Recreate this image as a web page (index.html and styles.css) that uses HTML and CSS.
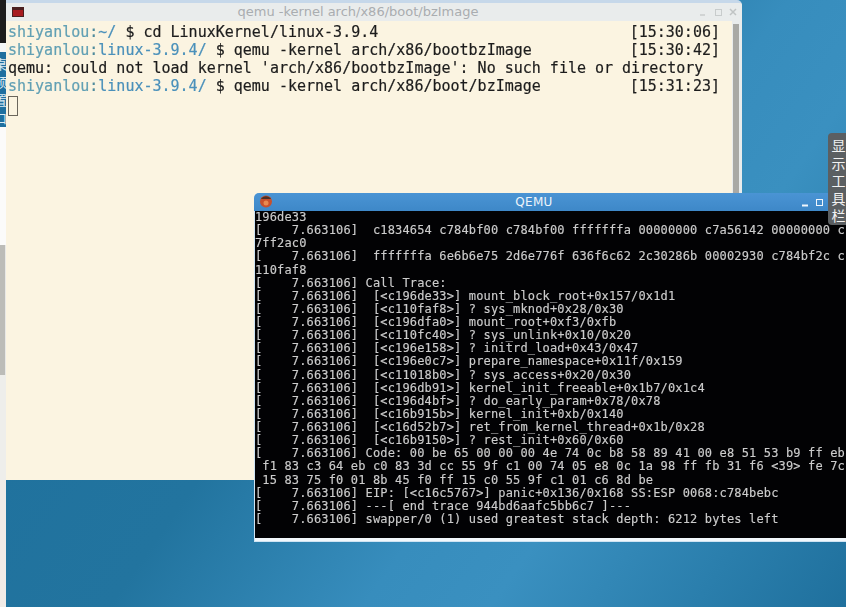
FILE: index.html
```html
<!DOCTYPE html>
<html lang="zh">
<head>
<meta charset="utf-8">
<title>QEMU</title>
<link rel="stylesheet" href="styles.css">
</head>
<body>
<main class="desktop">
  <aside class="edge">
    <div class="edge-dark"></div>
    <div class="edge-gap"></div>
    <div class="edge-blue"><span>桌</span><span>预</span><span>置</span><span>口</span></div>
    <div class="edge-white"></div>
    <div class="edge-thumb"></div>
    <div class="edge-light"></div>
    <div class="edge-rest"></div>
  </aside>

  <section class="terminal">
    <header class="term-title">
      <svg class="term-icon" width="12" height="10" viewBox="0 0 12 10"><rect width="12" height="10" fill="#4a2020"/><rect x="1" y="3" width="10" height="6" fill="#a81c20"/></svg>
      <span class="term-name">qemu -kernel arch/x86/boot/bzImage</span>
      <span class="term-btns">
        <svg width="44" height="10" viewBox="0 0 44 10"><path d="M1 8h5" stroke="#c8cccc" stroke-width="1.5"/><rect x="16.5" y="2.5" width="6" height="6" fill="none" stroke="#c8cccc"/><path d="M31 2l6 6M37 2l-6 6" stroke="#c0c4c4" stroke-width="1.5"/></svg>
      </span>
    </header>
    <div class="term-body">
      <div class="term-text">
        <div class="row"><span><b class="p1">shiyanlou</b><b class="p0">:</b><b class="p2">~/</b> $ cd LinuxKernel/linux-3.9.4</span><span>[15:30:06]</span></div>
        <div class="row"><span><b class="p1">shiyanlou</b><b class="p0">:</b><b class="p2">linux-3.9.4/</b> $ qemu -kernel arch/x86/bootbzImage</span><span>[15:30:42]</span></div>
        <div class="row"><span>qemu: could not load kernel 'arch/x86/bootbzImage': No such file or directory</span></div>
        <div class="row"><span><b class="p1">shiyanlou</b><b class="p0">:</b><b class="p2">linux-3.9.4/</b> $ qemu -kernel arch/x86/boot/bzImage</span><span>[15:31:23]</span></div>
        <div class="row"><span class="cursor"></span></div>
      </div>
      <div class="term-scroll"><div class="term-thumb"></div></div>
    </div>
  </section>

  <section class="qemu">
    <header class="qemu-title">
      <svg class="qemu-icon" width="14" height="14" viewBox="0 0 14 14"><circle cx="7" cy="7.5" r="6" fill="#c8502c"/><path d="M2 5a6 6 0 0 1 10 0z" fill="#4a3028"/><circle cx="7" cy="9" r="2.5" fill="#e88a50"/></svg>
      <span class="qemu-name">QEMU</span>
      <span class="qemu-btns">
        <svg width="30" height="10" viewBox="0 0 30 10"><path d="M0 7.5h6" stroke="#f0f6fc" stroke-width="2"/><rect x="14.5" y="1.5" width="6" height="6" fill="none" stroke="#f0f6fc"/></svg>
      </span>
    </header>
<pre class="console">196de33
[    7.663106]  c1834654 c784bf00 c784bf00 fffffffa 00000000 c7a56142 00000000 c
7ff2ac0
[    7.663106]  fffffffa 6e6b6e75 2d6e776f 636f6c62 2c30286b 00002930 c784bf2c c
110faf8
[    7.663106] Call Trace:
[    7.663106]  [&lt;c196de33&gt;] mount_block_root+0x157/0x1d1
[    7.663106]  [&lt;c110faf8&gt;] ? sys_mknod+0x28/0x30
[    7.663106]  [&lt;c196dfa0&gt;] mount_root+0xf3/0xfb
[    7.663106]  [&lt;c110fc40&gt;] ? sys_unlink+0x10/0x20
[    7.663106]  [&lt;c196e158&gt;] ? initrd_load+0x43/0x47
[    7.663106]  [&lt;c196e0c7&gt;] prepare_namespace+0x11f/0x159
[    7.663106]  [&lt;c11018b0&gt;] ? sys_access+0x20/0x30
[    7.663106]  [&lt;c196db91&gt;] kernel_init_freeable+0x1b7/0x1c4
[    7.663106]  [&lt;c196d4bf&gt;] ? do_early_param+0x78/0x78
[    7.663106]  [&lt;c16b915b&gt;] kernel_init+0xb/0x140
[    7.663106]  [&lt;c16d52b7&gt;] ret_from_kernel_thread+0x1b/0x28
[    7.663106]  [&lt;c16b9150&gt;] ? rest_init+0x60/0x60
[    7.663106] Code: 00 be 65 00 00 00 4e 74 0c b8 58 89 41 00 e8 51 53 b9 ff eb
 f1 83 c3 64 eb c0 83 3d cc 55 9f c1 00 74 05 e8 0c 1a 98 ff fb 31 f6 &lt;39&gt; fe 7c
 15 83 75 f0 01 8b 45 f0 ff 15 c0 55 9f c1 01 c6 8d be
[    7.663106] EIP: [&lt;c16c5767&gt;] panic+0x136/0x168 SS:ESP 0068:c784bebc
[    7.663106] ---[ end trace 944bd6aafc5bb6c7 ]---
[    7.663106] swapper/0 (1) used greatest stack depth: 6212 bytes left</pre>
  </section>

  <div class="toolbar-tab"><span>显</span><span>示</span><span>工</span><span>具</span><span>栏</span></div>
</main>
</body>
</html>
```
FILE: styles.css
```css
html, body {
  margin: 0;
  padding: 0;
  height: 100%;
  overflow: hidden;
  background: #2a7fae;
}

.desktop {
  position: relative;
  width: 846px;
  height: 607px;
  overflow: hidden;
  background: linear-gradient(125deg, #1d6f9c 0%, #22749f 42%, #378dbd 62%, #3a90c0 72%, #2a7eac 88%, #1f709d 100%);
}

/* Sliver of another window at the left screen edge */
.edge {
  position: absolute;
  left: 0;
  top: 0;
  width: 6px;
  height: 607px;
  display: flex;
  flex-direction: column;
  overflow: hidden;
}
.edge-dark { height: 43px; background: #1c1c1c; flex: none; }
.edge-gap { height: 9px; background: #f4f6f6; flex: none; }
.edge-blue {
  height: 75px;
  flex: none;
  background: #1f6f9f;
  color: #dcebf4;
  font: 13px/18px "Noto Sans CJK SC", sans-serif;
  display: flex;
  flex-direction: column;
  align-items: flex-end;
  padding-top: 3px;
  box-sizing: border-box;
}
.edge-blue span { display: block; width: 13px; flex: none; margin-right: -1px; }
.edge-white { height: 118px; background: #fbfbfa; flex: none; }
.edge-thumb { height: 130px; background: #bcbcb8; border-right: 1px solid #e8e8e6; flex: none; box-sizing: border-box; }
.edge-light { height: 105px; background: #eeeeeb; flex: none; }
.edge-rest { flex: 1; background: #f0ebe7; }

/* Terminal window */
.terminal {
  position: absolute;
  left: 6px;
  top: 0;
  width: 736px;
  height: 480px;
  box-sizing: border-box;
  border-top: 3px solid #c6d8ea;
  display: flex;
  flex-direction: column;
  background: #fbf4e1;
  border-top-right-radius: 5px;
  overflow: hidden;
}
.term-title {
  position: relative;
  flex: none;
  height: 18px;
  display: flex;
  align-items: center;
  justify-content: center;
  background: #e9ecec;
}
.term-icon { position: absolute; left: 6px; top: 4px; }
.term-name {
  font: 13px/18px "DejaVu Sans", sans-serif;
  color: #a9adb0;
  margin-left: -32px;
}
.term-btns { position: absolute; left: 693px; top: 4px; line-height: 0; }

.term-body {
  flex: 1;
  display: flex;
  min-height: 0;
}
.term-text {
  flex: 1;
  padding: 2px 0 0 2px;
  font: 15px/18px "DejaVu Sans Mono", monospace;
  color: #1c1c1c;
  -webkit-text-stroke: .2px currentColor;
  filter: blur(.3px);
}
.row {
  display: flex;
  justify-content: space-between;
  width: 712px;
  height: 18px;
  white-space: pre;
}
.row b { font-weight: 400; }
.p0 { color: #4f8a9c; }
.p1 { color: #62a0b4; }
.p2 { color: #4a90ba; }
.cursor {
  display: block;
  width: 10px;
  height: 20px;
  box-sizing: border-box;
  border: 1px solid #6a665c;
  margin-top: 1px;
}
.term-scroll {
  flex: none;
  width: 10px;
  background: #e9ecec;
  padding: 3px 3px 0 0;
  box-sizing: border-box;
}
.term-thumb {
  width: 6px;
  margin-left: 1px;
  height: 100%;
  background: #a9a9a5;
}

/* QEMU window */
.qemu {
  position: absolute;
  left: 254px;
  top: 193px;
  width: 600px;
  height: 349px;
  display: flex;
  flex-direction: column;
  border-top-left-radius: 5px;
  overflow: hidden;
  background: #cfe4f3;
}
.qemu-title {
  position: relative;
  flex: none;
  height: 18px;
  display: flex;
  align-items: center;
  justify-content: center;
  background: linear-gradient(#4a94d4, #3e88c8);
}
.qemu-icon { position: absolute; left: 5px; top: 1px; }
.qemu-name {
  font: 12px/18px "DejaVu Sans", sans-serif;
  color: #eef4fa;
  letter-spacing: .3px;
  margin-left: -40px;
}
.qemu-btns { position: absolute; left: 548px; top: 5px; line-height: 0; }
.console {
  flex: none;
  height: 327px;
  margin: 0 0 0 1px;
  background: #020204;
  border-bottom: 3px solid #f2f8fc;
  color: #cccccc;
  font: 12px/13.13px "DejaVu Sans Mono", monospace;
  letter-spacing: .15px;
  -webkit-text-stroke: .15px currentColor;
  overflow: hidden;
  filter: blur(.3px);
}

/* Floating toolbar tab */
.toolbar-tab {
  position: absolute;
  left: 828px;
  top: 133px;
  width: 18px;
  height: 92px;
  padding: 4px 0 0 3px;
  box-sizing: border-box;
  background: #5b5f62;
  border-radius: 4px 0 0 4px;
  color: #f2f2f2;
  font: 14px/17.5px "Noto Sans CJK SC", sans-serif;
  display: flex;
  flex-direction: column;
  align-items: center;
}
```
